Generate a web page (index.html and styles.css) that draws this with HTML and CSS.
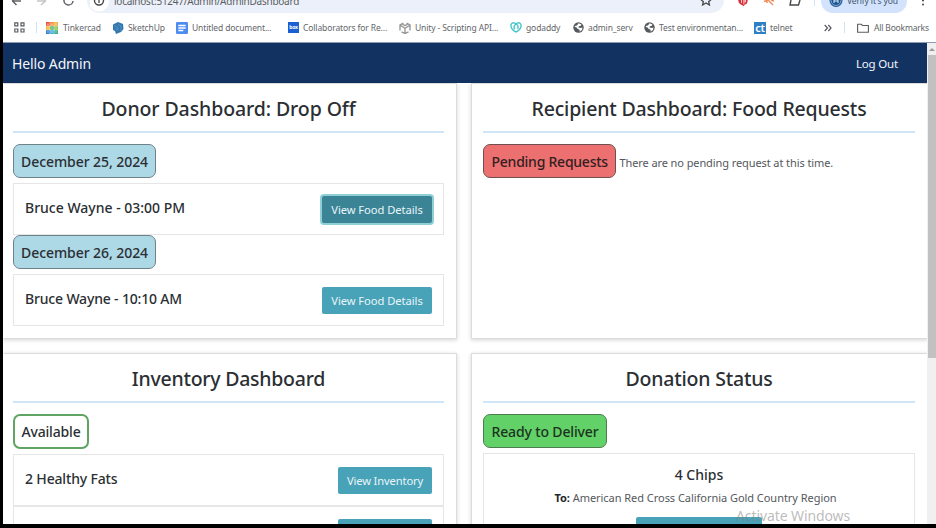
FILE: index.html
```html
<!DOCTYPE html>
<html lang="en">
<head>
<meta charset="utf-8">
<title>Admin Dashboard</title>
<link rel="stylesheet" href="styles.css">
</head>
<body>
<div class="window">
  <div class="toolbar">
    <svg class="nav-icons" width="84" height="13" viewBox="0 0 84 13" fill="none" stroke-width="1.500">
      <path d="M13.500 -4 L9.500 1 L13.500 5 M9.500 1 H18" stroke="#5f6368"/>
      <path d="M38 -4 L42.500 1 L38 5 M42 1 H34" stroke="#c4c6c9"/>
      <path d="M61 0 A4.500 4.500 0 0 0 70 1" stroke="#5f6368"/>
    </svg>
    <div class="address">
      <svg class="info" width="20" height="13" viewBox="0 0 20 13"><circle cx="9" cy="1.500" r="10" fill="#fff"/><circle cx="9" cy="0.500" r="4.500" fill="none" stroke="#474747" stroke-width="1.400"/><path d="M9 -1V3" stroke="#474747" stroke-width="1.300"/></svg>
      <span class="t url">localhost:51247/Admin/AdminDashboard</span>
      <svg class="star" width="14" height="13" viewBox="0 0 14 13" fill="none" stroke="#474747" stroke-width="1.300"><path d="M2 0 L4.300 1.500 L3.600 5 L7 3 L10.400 5 L9.700 1.500 L12 0"/></svg>
    </div>
    <svg class="ext" width="74" height="13" viewBox="0 0 74 13">
      <circle cx="14" cy="0.500" r="4.700" fill="#d8323c"/><path d="M12.500 -2V4M14.500 6V0H17V3H15" stroke="#d8323c" stroke-width="1.500" fill="none"/><path d="M12.500 -2V3M14.800 4.500V0H16.500V2H15" stroke="#fff" stroke-width=".7" fill="none"/>
      <path d="M35 1.500 L41 -1 M39 0 L44 5 M42 0 L45 1 M38 -1V3" stroke="#f08a5a" stroke-width="1.400"/>
      <path d="M62 0 L61 5 H69.500 L71 0" fill="none" stroke="#474747" stroke-width="1.400"/>
    </svg>
    <span class="tool-sep"></span>
    <div class="verify">
      <svg width="14" height="13" viewBox="0 0 14 13"><circle cx="7" cy="0.500" r="6.500" fill="#1d5591"/><circle cx="7" cy="0.500" r="5" fill="none" stroke="#b4d0ee" stroke-width=".7"/><path d="M5 -1V3M9 -1V3M5 1H9" stroke="#dce9fa" stroke-width="1"/></svg>
      <span class="t">Verify it's you</span>
    </div>
    <svg class="kebab" width="6" height="13" viewBox="0 0 6 13" fill="#474747"><circle cx="3" cy="0.500" r="1"/><circle cx="3" cy="4.500" r="1"/></svg>
  </div>

  <div class="bookmarks">
    <svg class="grid-icon" width="11" height="11" viewBox="0 0 11 11" fill="none" stroke="#5a5d61" stroke-width="1.200"><path d="M.8 .8h3v3h-3zM7 .8h3v3H7zM.8 7h3v3h-3zM7 7h3v3H7z"/></svg>
    <span class="bar-sep sep-first"></span>
    <div class="bm bm-tinkercad">
      <svg width="12" height="12" viewBox="0 0 12 12"><path fill="#e8513c" d="M0 0h4v4H0z"/><path fill="#f08a3c" d="M4 0h4v4H4z"/><path fill="#f4b53d" d="M8 0h4v4H8zM0 4h4v4H0z"/><path fill="#56b868" d="M4 4h4v4H4z"/><path fill="#8ac75a" d="M8 4h4v4H8z"/><path fill="#3b86c9" d="M0 8h4v4H0z"/><path fill="#42aee0" d="M4 8h4v4H4z"/><path fill="#3fae8c" d="M8 8h4v4H8z"/><path stroke="#fff" stroke-opacity=".6" stroke-width=".7" d="M1 2h2M2 2v1.500M5 2h2M6 2v1.500M9 2h2M1 6h2M5 6h2M9 6h2M1 10h2M5 10h2M9 10h2M4 0v12M8 0v12M0 4h12M0 8h12"/></svg>
      <span class="t">Tinkercad</span></div>
    <div class="bm bm-sketchup">
      <svg width="12" height="12" viewBox="0 0 12 12"><path fill="#3278ae" d="M1 2.500 L6 0 L11 2 L11.500 7 L9 10 L4 12 L3 9 L1 8z"/><path d="M2 3.500 L6 5.500 V8 L3 6.800 M6 2.500 L9 4 V9" stroke="#5c9bc9" fill="none" stroke-width=".8"/></svg>
      <span class="t">SketchUp</span></div>
    <div class="bm bm-doc">
      <svg width="12" height="12" viewBox="0 0 12 12"><rect width="12" height="12" rx="1.200" fill="#4d8bf0"/><path d="M2.300 3.500h7.400M2.300 6h7.400M2.300 8.500h5" stroke="#fff" stroke-width="1.300"/></svg>
      <span class="t">Untitled document...</span></div>
    <div class="bm bm-box">
      <span class="box-icon">box</span>
      <span class="t">Collaborators for Re...</span></div>
    <div class="bm bm-unity">
      <svg width="12" height="12" viewBox="0 0 12 12" fill="none" stroke="#929292" stroke-width="1.300"><path d="M4.500 1 L1 3 V8.500 M7.500 1 L11 3 V8.500 M2.500 9.800 L6 11.500 L9.500 9.800 M6 6.300V11 M6 6.300 L1.500 3.500 M6 6.300 L10.500 3.500 M3.500 2.300 L6 3.500 L8.500 2.300"/></svg>
      <span class="t">Unity - Scripting API...</span></div>
    <div class="bm bm-godaddy">
      <svg width="12" height="11" viewBox="0 0 12 11" fill="none" stroke="#45c5c8" stroke-width="1.400"><path d="M6 10 C2 8.500 .2 4.500 1.300 2 C2.500 0 5.500 .5 7.500 3.200 C8.700 5 8 6.500 7.200 6.500 M6 10 C10 8.500 11.800 4.500 10.700 2 C9.500 0 6.500 .5 4.800 3.200 C3.600 5 4 6.500 5 7"/></svg>
      <span class="t">godaddy</span></div>
    <div class="bm bm-admin">
      <svg width="11" height="11" viewBox="0 0 11 11"><circle cx="5.500" cy="5.500" r="5.200" fill="#55585c"/><path fill="#fff" d="M5.500 1.300 L8.500 2.500 L7.500 4 L5.800 4.300 L5.500 5.500 L7.500 6 L9.500 5.500 L9 8 L6.500 9.700 L6.700 7.800 L4.800 7 L3.500 5.500 L1.500 4.800 L2.500 3.800 L4 3.500z"/></svg>
      <span class="t">admin_serv</span></div>
    <div class="bm bm-test">
      <svg width="11" height="11" viewBox="0 0 11 11"><circle cx="5.500" cy="5.500" r="5.200" fill="#55585c"/><path fill="#fff" d="M5.500 1.300 L8.500 2.500 L7.500 4 L5.800 4.300 L5.500 5.500 L7.500 6 L9.500 5.500 L9 8 L6.500 9.700 L6.700 7.800 L4.800 7 L3.500 5.500 L1.500 4.800 L2.500 3.800 L4 3.500z"/></svg>
      <span class="t">Test environmentan...</span></div>
    <div class="bm bm-telnet">
      <span class="ct-icon">ct</span>
      <span class="t">telnet</span></div>
    <svg class="more" width="8" height="8" viewBox="0 0 8 8" fill="none" stroke="#505357" stroke-width="1.100"><path d="M.7 1 L3.500 4 L.7 7 M4.300 1 L7.100 4 L4.300 7"/></svg>
    <span class="bar-sep sep-last"></span>
    <div class="bm bm-all">
      <svg width="12" height="10" viewBox="0 0 12 10" fill="none" stroke="#5a5d61" stroke-width="1.100"><path d="M.6 8.600 V1.300 H4.300 L5.500 2.500 H11.400 V9.300 H.6z"/></svg>
      <span class="t">All Bookmarks</span></div>
  </div>

  <div class="viewport">
    <div class="page">
      <header class="appbar">
        <span class="t hello">Hello Admin</span>
        <span class="t logout">Log Out</span>
      </header>
      <main class="cards">
        <section class="card">
          <h2><span class="t h-donor">Donor Dashboard: Drop Off</span></h2>
          <div class="tag tag-date"><span class="t">December 25, 2024</span></div>
          <div class="row">
            <span class="t name name-1">Bruce Wayne - 03:00 PM</span>
            <span class="btn btn-food focused"><span class="t">View Food Details</span></span>
          </div>
          <div class="tag tag-date"><span class="t">December 26, 2024</span></div>
          <div class="row">
            <span class="t name name-2">Bruce Wayne - 10:10 AM</span>
            <span class="btn btn-food"><span class="t">View Food Details</span></span>
          </div>
        </section>
        <section class="card">
          <h2><span class="t h-recipient">Recipient Dashboard: Food Requests</span></h2>
          <div class="inline">
            <div class="tag tag-pending"><span class="t">Pending Requests</span></div>
            <span class="t note">There are no pending request at this time.</span>
          </div>
        </section>
        <section class="card">
          <h2><span class="t h-inventory">Inventory Dashboard</span></h2>
          <div class="tag tag-available"><span class="t">Available</span></div>
          <div class="row">
            <span class="t name name-3">2 Healthy Fats</span>
            <span class="btn btn-inv"><span class="t">View Inventory</span></span>
          </div>
          <div class="row row-joined">
            <span></span>
            <span class="btn btn-inv"></span>
          </div>
        </section>
        <section class="card">
          <h2><span class="t h-donation">Donation Status</span></h2>
          <div class="tag tag-ready"><span class="t">Ready to Deliver</span></div>
          <div class="delivery">
            <span class="t item">4 Chips</span>
            <span class="dest"><span class="t"><b>To:</b> American Red Cross California Gold Country Region</span></span>
            <span class="btn btn-deliver"></span>
          </div>
        </section>
      </main>
    </div>
    <div class="scrollbar"><span class="arrow"></span><span class="thumb"></span></div>
  </div>
  <div class="watermark"><span class="t">Activate Windows</span></div>
</div>
</body>
</html>
```
FILE: styles.css
```css
* { box-sizing: border-box; }
html, body { height: 100%; margin: 0; overflow: hidden; }
body { background: #000; padding: 0 0 4px 3px; font-family: "Noto Sans", "Open Sans", sans-serif; color: #2b2f33; }
svg { display: block; flex: none; overflow: hidden; }
.t { white-space: nowrap; }

.window { position: relative; height: 524px; background: #fff; overflow: hidden; display: flex; flex-direction: column; }

/* Browser chrome */
.toolbar { flex: none; height: 13px; display: flex; overflow: hidden; line-height: 12px; }
.address { flex: none; width: 637px; display: flex; background: #ebf0fa; border-radius: 0 0 13px 13px; }
.info { margin-left: 3px; }
.url { margin: -5px 0 0 4px; width: 585px; font-size: 10px; letter-spacing: -.25px; color: #5a5d61; }
.ext { margin-left: 5px; }
.tool-sep { flex: none; width: 1px; height: 6px; margin: 0 7px 0 11px; background: #d3e3fd; }
.verify { flex: none; width: 86px; margin-left: -1px; padding-left: 8px; display: flex; gap: 4px; background: #d3e3fd; border-radius: 0 0 12px 12px; color: #40546e; font-size: 8.500px; letter-spacing: -.15px; }
.verify .t { margin-top: -5px; }
.kebab { margin-left: 13px; }

.bookmarks { flex: none; height: 30px; display: flex; align-items: center; border-bottom: 1px solid #8d9bb3; font-size: 8.500px; letter-spacing: -.12px; color: #63666a; }
.grid-icon { margin-left: 11px; }
.bar-sep { flex: none; width: 1px; height: 11px; background: #cfe0f8; }
.sep-first { margin-left: 11px; }
.bm { display: flex; align-items: center; flex: none; gap: 4px; }
.bm-tinkercad { margin-left: 9px; width: 66px; gap: 5px; }
.bm-sketchup { width: 64px; }
.bm-doc { width: 112px; }
.bm-box { width: 111px; }
.bm-unity { width: 111px; }
.bm-godaddy { width: 63px; }
.bm-admin { width: 71px; }
.bm-test { width: 110px; }
.bm-telnet { width: 70px; }
.box-icon { width: 11px; height: 11px; background: #1b5fd0; color: #fff; font-size: 5px; line-height: 10px; text-align: center; font-weight: 700; }
.ct-icon { width: 12px; height: 12px; background: #2f7fc4; color: #fff; font-size: 11px; line-height: 11px; text-align: center; font-weight: 600; }
.sep-last { margin-left: 12px; }
.bm-all { margin-left: 12px; gap: 5px; letter-spacing: -.18px; }

/* Page */
.viewport { flex: 1; min-height: 0; display: flex; }
.page { flex: none; width: 924px; overflow: hidden; }
.appbar { height: 40px; padding: 1px 29px 0 9px; background: #123262; color: #f2f5fa; display: flex; align-items: center; justify-content: space-between; }
.hello { font-size: 14px; letter-spacing: -.13px; }
.logout { font-size: 11.500px; letter-spacing: -.18px; }

.cards { display: grid; grid-template-columns: 454px 457px; grid-template-rows: 256px 256px; gap: 14px; }
.card { background: #fff; border: 1px solid #dcdcdc; box-shadow: 0 1px 4px rgba(0,0,0,.18); padding: 0 12px 0 11px; }
.card:nth-child(odd) { padding: 0 12px 0 9px; border-left-color: transparent; }
h2 { margin: 0 0 11px; height: 49px; border-bottom: 2px solid #cfe5f8; text-align: center; font-size: 19.500px; font-weight: 500; line-height: 49px; }
.h-donor { letter-spacing: -.1px; }
.h-recipient { letter-spacing: -.18px; }
.h-inventory { letter-spacing: -.25px; }
.h-donation { letter-spacing: -.2px; }

.tag { width: fit-content; height: 34px; padding: 0 7px; border: 1px solid #6f8288; border-radius: 7px; font-size: 14px; font-weight: 500; line-height: 34px; }
.tag-date { background: #add8e6; letter-spacing: -.07px; }
.tag-pending { background: #ec7070; border-color: #6e5050; letter-spacing: -.24px; padding: 0 7.500px; color: #33201f; }
.tag-available { height: 35px; border: 2px solid #5fa463; line-height: 32px; padding: 0 6.500px; letter-spacing: -.18px; }
.tag-ready { background: #62d168; border-color: #4d7c50; letter-spacing: -.15px; padding: 0 7.500px; color: #1d3320; }
.inline { display: flex; align-items: center; gap: 3px; }
.note { padding-top: 2px; font-size: 11px; letter-spacing: -.09px; color: #54585c; }

.row { margin-top: 5px; height: 52px; border: 1px solid #e6e6e6; display: flex; justify-content: space-between; padding: 0 11px; }
.row-joined { margin-top: 0; }
.name { font-size: 14px; font-weight: 500; line-height: 47px; }
.name-2 { letter-spacing: -.17px; }
.name-3 { letter-spacing: -.16px; }
.btn { margin-top: 12px; height: 27px; border-radius: 2px; background: #48a2b8; color: #e8f6f9; font-size: 11.200px; line-height: 28px; text-align: center; }
.btn-food { width: 110px; letter-spacing: -.06px; }
.btn-inv { width: 94px; letter-spacing: -.14px; }
.focused { background: #3b8496; box-shadow: 0 0 0 2px #8fd0d6; }

.delivery { margin-top: 5px; height: 90px; border: 1px solid #e6e6e6; display: flex; flex-direction: column; align-items: center; }
.item { margin-top: 10px; font-size: 14px; font-weight: 500; line-height: 22px; }
.dest { margin-top: 3px; padding-right: 7px; font-size: 11px; letter-spacing: -.04px; line-height: 18px; color: #54585c; }
.dest b { color: #24282c; }
.btn-deliver { width: 126px; margin-top: 10px; }

.scrollbar { width: 9px; background: #f0f0f0; display: flex; flex-direction: column; align-items: center; }
.arrow { margin: 5px 0 4px; border: 3px solid transparent; border-top: 0; border-bottom: 3px solid #9a9a9a; }
.thumb { width: 8px; height: 303px; background: #c1c1c1; }

.watermark { position: absolute; left: 733px; top: 506px; font-size: 14px; letter-spacing: -.1px; line-height: 20px; color: rgba(130,130,130,.55); }
```
